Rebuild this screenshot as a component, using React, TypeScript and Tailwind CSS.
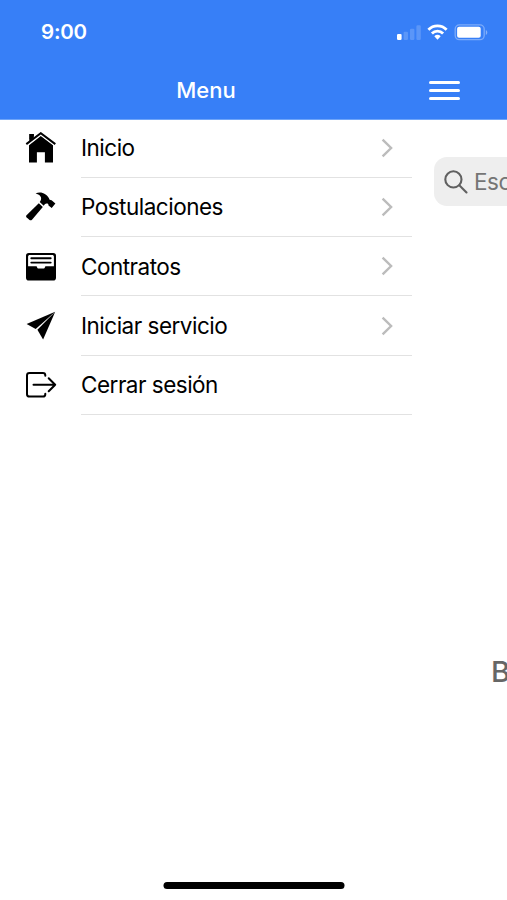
import type { ReactNode } from 'react';

type MenuItem = {
  label: string;
  icon: ReactNode;
  arrow: boolean;
};

function HomeIcon() {
  return (
    <svg viewBox="0 0 32 32" className="h-8 w-8" fill="currentColor">
      <path d="M4.4 2h4.4v4L4.4 9.6z" />
      <path d="M15.8 3.9 4 13.2v17.3h7.9V20.2h8v10.3H28V13.2z" />
      <path d="M1.3 12.3 15.8 1.2l14.5 11.1" fill="none" stroke="#fff" strokeWidth="3.6" />
      <path d="M4.4 2h4.4v4L4.4 9.2z" />
      <path d="M1.3 12.1 15.8 1.2l14.5 10.9" fill="none" stroke="currentColor" strokeWidth="2" />
    </svg>
  );
}

function HammerIcon() {
  return (
    <svg viewBox="0 0 32 32" className="h-8 w-8" fill="currentColor">
      <path d="M10.6 2.5c2.8-1.5 6.8-1.3 9.6.7 2.6 1.8 3.9 3.5 4.2 5.2.6.4 1.5.4 2.2.8l3.8 3.3-3.7 4.4-3.2-2.5c0-1.4-.6-1.9-1.6-1.9-1.3-.2-2 .6-3.2 2.2l-4-3.7c2.4-2.7 2.3-6.9-4.1-8.5z" />
      <path d="m13.8 12.2 4 3.8L7 28.7c-.8.8-1.7.9-2.5.2l-3-2.7c-.6-.6-.6-1.3 0-1.9z" />
    </svg>
  );
}

function FileTrayIcon() {
  return (
    <svg viewBox="0 0 32 32" className="h-8 w-8">
      <rect x="1" y="2" width="30" height="27.5" rx="2.8" fill="currentColor" />
      <path
        d="M4.8 4h22.4c1 0 1.7.6 1.7 1.6v9.6h-8.2c-.4 0-.6.3-.7.7-.2 1-.8 1.7-1.8 1.7h-4.4c-1 0-1.6-.7-1.8-1.7-.1-.4-.3-.7-.7-.7H3.1V5.6c0-1 .7-1.6 1.7-1.6z"
        fill="#fff"
      />
      <path d="M6.3 7.2h19.4M6.3 11.6h19.4" stroke="currentColor" strokeWidth="1.9" strokeLinecap="round" />
    </svg>
  );
}

function SendIcon() {
  return (
    <svg viewBox="0 0 32 32" className="h-8 w-8" fill="currentColor">
      <path d="M30.2 1.7 1.6 13.9l9.1 5.1z" />
      <path d="m30.2 1.7-17.8 18 5.7 9.9z" />
    </svg>
  );
}

function ExitIcon() {
  return (
    <svg
      viewBox="0 0 32 32"
      className="h-8 w-8"
      fill="none"
      stroke="currentColor"
      strokeWidth="2"
      strokeLinecap="round"
      strokeLinejoin="round"
    >
      <path d="M20.3 6.8V6.3c0-1.4-1-2.4-2.4-2.4H4.5C3 3.9 2 4.9 2 6.3v18.9c0 1.4 1 2.4 2.5 2.4h13.4c1.4 0 2.4-1 2.4-2.4v-.4" />
      <path d="M8.5 15.8h21.7M23.7 9.3l6.5 6.5-6.5 6.5" />
    </svg>
  );
}

function Chevron() {
  return (
    <svg viewBox="0 0 12 20" className="h-5 w-3" fill="none" stroke="#bcbcbc" strokeWidth="2.4">
      <path d="m1.6 1.6 8.5 8.4-8.5 8.4" />
    </svg>
  );
}

const items: MenuItem[] = [
  { label: 'Inicio', icon: <HomeIcon />, arrow: true },
  { label: 'Postulaciones', icon: <HammerIcon />, arrow: true },
  { label: 'Contratos', icon: <FileTrayIcon />, arrow: true },
  { label: 'Iniciar servicio', icon: <SendIcon />, arrow: true },
  { label: 'Cerrar sesión', icon: <ExitIcon />, arrow: false },
];

function StatusBar() {
  return (
    <div className="flex h-[62px] items-center justify-between pt-[3px] pr-[19px] pl-[41px]">
      <span className="text-[20.5px] font-semibold tracking-[-0.2px]">9:00</span>
      <svg viewBox="0 0 92 20" className="mb-[3px] h-5 w-[92px]" fill="#fff">
        {/* signal */}
        <rect x="1" y="12.9" width="4.6" height="6" rx="1.2" />
        <g opacity="0.18">
          <rect x="7.6" y="10.7" width="4.4" height="8.2" rx="1.2" />
          <rect x="14" y="7.7" width="4.4" height="11.2" rx="1.2" />
          <rect x="20.4" y="4.3" width="4.4" height="14.6" rx="1.2" />
        </g>
        {/* wifi */}
        <g fill="none" stroke="#fff" strokeWidth="2.8">
          <path d="M32.4 8.7a12.6 12.6 0 0 1 18.2 0" />
          <path d="M35.9 12.5a7.8 7.8 0 0 1 11.2 0" />
        </g>
        <path d="M38.3 15.2a4.8 4.8 0 0 1 6.4 0l-3.2 3.6z" />
        {/* battery */}
        <rect x="59.2" y="3.9" width="29" height="14.8" rx="4.2" fill="none" stroke="#fff" strokeWidth="1.3" opacity="0.35" />
        <path d="M89.8 8.9c2 .7 2 4.3 0 5z" opacity="0.4" />
        <rect x="61.1" y="5.8" width="23.6" height="11" rx="2" />
      </svg>
    </div>
  );
}

export default function App() {
  return (
    <div className="flex h-[900px] w-[507px] flex-col overflow-hidden bg-white font-['Inter','Liberation_Sans',sans-serif] text-black">
      <header className="h-[120px] shrink-0 border-b border-[#6fa5f9] bg-[#377ff7] text-white">
        <StatusBar />
        <div className="flex h-14 items-center">
          <h1 className="w-[412px] pt-px text-center text-[22px] font-[550]">Menu</h1>
          <button aria-label="Menu" className="mt-px ml-[17px] flex w-[31px] flex-col gap-[5px]">
            <span className="h-[2.8px] rounded-sm bg-white" />
            <span className="h-[2.8px] rounded-sm bg-white" />
            <span className="h-[2.8px] rounded-sm bg-white" />
          </button>
        </div>
      </header>

      <div className="flex min-h-0 flex-1">
        <nav className="w-[412px] shrink-0">
          <ul className="-mt-[1.5px]">
            {items.map((item) => (
              <li key={item.label} className="flex h-[59.3px] items-center pl-[25px]">
                {item.icon}
                <div className="ml-6 flex h-full flex-1 items-center justify-between border-b border-[#e2e2e2] pr-[19px]">
                  <span className="pt-[0.5px] text-[22.5px] tracking-[-0.5px]">{item.label}</span>
                  {item.arrow && <Chevron />}
                </div>
              </li>
            ))}
          </ul>
        </nav>

        {/* Page behind the menu, pushed to the right */}
        <main className="min-w-0 flex-1 overflow-hidden pt-[37px] pl-[22px]">
          <div className="flex h-[49px] w-[460px] items-center rounded-[13px] bg-[#eeeeee] pl-2.5 text-[#757575]">
            <svg viewBox="0 0 24 24" className="h-6 w-6" fill="none" stroke="#606060" strokeWidth="2.1" strokeLinecap="round">
              <circle cx="9.4" cy="9.4" r="8.1" />
              <path d="m15.3 15.3 7.2 7.2" />
            </svg>
            <span className="ml-[6px] pt-px text-[22.5px] tracking-[-0.5px]">Esc</span>
          </div>
          <p className="mt-[447px] ml-[57px] w-[300px] text-[29px] leading-[38px] font-medium text-[#666]">B</p>
        </main>
      </div>

      <div className="mx-auto mb-[11px] h-[7px] w-[181px] shrink-0 translate-x-[0.5px] rounded-full bg-black" />
    </div>
  );
}
